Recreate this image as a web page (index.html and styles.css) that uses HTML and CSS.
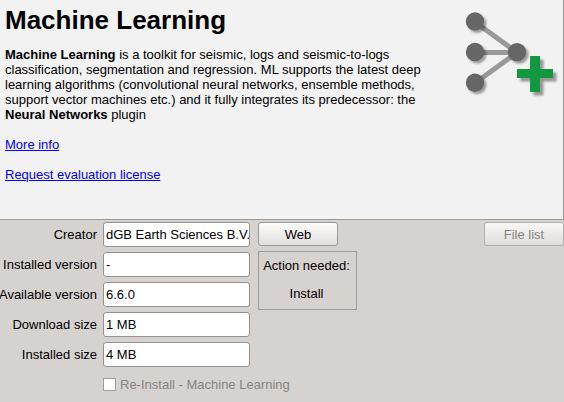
FILE: index.html
```html
<!DOCTYPE html>
<html lang="en">
<head>
<meta charset="utf-8">
<title>Machine Learning</title>
<link rel="stylesheet" href="styles.css">
</head>
<body>
<section class="info">
  <div class="description">
    <h1 class="title">Machine Learning</h1>
    <p class="text"><b>Machine Learning</b> is a toolkit for seismic, logs and seismic-to-logs<br>classification, segmentation and regression. ML supports the latest deep<br>learning algorithms (convolutional neural networks, ensemble methods,<br>support vector machines etc.) and it fully integrates its predecessor: the<br><b>Neural Networks</b> plugin</p>
    <p class="text"><a href="#">More info</a></p>
    <p class="text"><a href="#">Request evaluation license</a></p>
  </div>
  <svg class="logo" width="100" height="100" viewBox="460 4 100 100">
    <defs>
      <filter id="shadow" x="-20%" y="-20%" width="150%" height="150%">
        <feDropShadow dx="2.2" dy="2.2" stdDeviation="1.1" flood-color="#000" flood-opacity=".38"/>
      </filter>
      <filter id="plus-shadow" x="-20%" y="-20%" width="150%" height="150%" color-interpolation-filters="sRGB">
        <feDropShadow dx="3.5" dy="3.5" stdDeviation=".8" flood-color="#000" flood-opacity=".38"/>
      </filter>
    </defs>
    <path d="M475 22 517 52.5 475 83M475 52.5H517" fill="none" stroke="#999" stroke-width="5"/>
    <g fill="#666" filter="url(#shadow)">
      <circle cx="475" cy="21.5" r="9.2"/>
      <circle cx="475" cy="52" r="9.2"/>
      <circle cx="475" cy="82.7" r="9.2"/>
      <circle cx="517" cy="52.3" r="9.2"/>
    </g>
    <path d="M530 56h10v13h13v9h-13v14h-10V78h-13v-9h13z" fill="#12993f" filter="url(#plus-shadow)"/>
  </svg>
</section>
<main class="details">
  <div class="form">
    <div class="row"><span class="label">Creator</span><span class="field">dGB Earth Sciences B.V.</span></div>
    <div class="row"><span class="label">Installed version</span><span class="field">-</span></div>
    <div class="row"><span class="label">Available version</span><span class="field">6.6.0</span></div>
    <div class="row"><span class="label">Download size</span><span class="field">1 MB</span></div>
    <div class="row"><span class="label">Installed size</span><span class="field">4 MB</span></div>
    <div class="check"><span class="box"></span><span>Re-Install - Machine Learning</span></div>
  </div>
  <div class="actions">
    <button class="button">Web</button>
    <div class="status"><span>Action needed:</span><span>Install</span></div>
  </div>
  <button class="button files" disabled>File list</button>
</main>
</body>
</html>
```

FILE: styles.css
```css
* {
  box-sizing: border-box;
}

body {
  margin: 0;
  height: 402px;
  overflow: hidden;
  background: #d6d2cf;
  color: #000;
  font: 13px/15px "Liberation Sans", Arial, sans-serif;
}

.info {
  display: flex;
  justify-content: space-between;
  height: 220px;
  padding: 4px 3px 0 5px;
  border-right: 1px solid #999;
  border-bottom: 1px solid #9c9a98;
  background: #f2f2f2;
}

.title {
  margin: 0 0 11px;
  font-size: 26px;
  line-height: 32px;
}

.text {
  margin: 0 0 15px;
  white-space: nowrap;
}

.text a {
  color: #00f;
  text-underline-offset: 1px;
}

.logo {
  flex: none;
}

.details {
  display: flex;
  padding-top: 2px;
}

.form {
  width: 250px;
}

.row {
  display: flex;
  justify-content: flex-end;
  align-items: center;
  gap: 6px;
  height: 25px;
  margin-bottom: 5px;
  white-space: nowrap;
}

.field {
  flex: none;
  width: 147px;
  height: 25px;
  padding: 0 2px;
  overflow: hidden;
  border: 1px solid #949290;
  border-radius: 3px;
  background: #fff;
  line-height: 24px;
}

.check {
  display: flex;
  align-items: center;
  gap: 4px;
  height: 25px;
  margin-left: 103px;
  color: #878583;
  white-space: nowrap;
}

.box {
  flex: none;
  width: 13px;
  height: 13px;
  border: 1px solid #a09e9b;
  background: #fff;
}

.actions {
  margin-left: 8px;
}

.button {
  display: block;
  width: 80px;
  height: 24px;
  padding: 0;
  border: 1px solid #9b9997;
  border-radius: 3px;
  background: linear-gradient(#fdfdfd, #e0dedc);
  color: #000;
  font: inherit;
}

.files {
  margin-left: auto;
  border-color: #b0aeac;
  background: linear-gradient(#f8f8f7, #dfddda);
  color: #878583;
}

.status {
  display: flex;
  flex-direction: column;
  align-items: center;
  gap: 13px;
  width: 99px;
  height: 59px;
  margin-top: 5px;
  padding: 6px 2px 0 0;
  border: 1px solid #a09e9b;
  white-space: nowrap;
}
```
